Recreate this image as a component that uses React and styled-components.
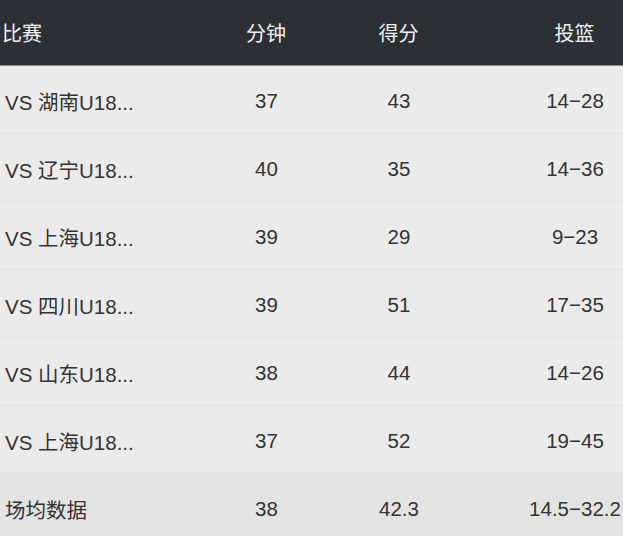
import React from "react";
import styled, { createGlobalStyle } from "styled-components";

const GlobalStyle = createGlobalStyle`
    html, body {
        margin: 0;
        padding: 0;
        background: #ebebeb;
    }
`;

const Viewport = styled.div`
    width: 100%;
    overflow: hidden;
`;

const Table = styled.div`
    width: 685px;
    font-family: "Liberation Sans", "Noto Sans CJK SC", sans-serif;
    color: #333;
`;

const Row = styled.div`
    display: grid;
    grid-template-columns: 200px 133px 132px 220px;
    height: ${(p) => p.$height}px;
    background-color: ${(p) => p.$bg};
    border-bottom: 1px solid ${(p) => p.$line};
    box-sizing: border-box;
`;

const HeadCell = styled.div`
    display: flex;
    align-items: center;
    justify-content: ${(p) => (p.$left ? "flex-start" : "center")};
    padding-left: ${(p) => (p.$left ? "2px" : "0")};
    font-size: 20px;
    color: #f2f2f2;
    border-right: 1px solid #292d32;
`;

const Cell = styled.div`
    display: flex;
    align-items: center;
    justify-content: ${(p) => (p.$left ? "flex-start" : "center")};
    padding-left: ${(p) => (p.$left ? "5px" : "0")};
    padding-top: 3px;
    font-size: 20.5px;
    white-space: nowrap;
`;

const games = [
    ["VS 湖南U18...", "37", "43", "14−28"],
    ["VS 辽宁U18...", "40", "35", "14−36"],
    ["VS 上海U18...", "39", "29", "9−23"],
    ["VS 四川U18...", "39", "51", "17−35"],
    ["VS 山东U18...", "38", "44", "14−26"],
    ["VS 上海U18...", "37", "52", "19−45"],
];

const App = () => (
    <>
        <GlobalStyle/>
        <Viewport>
            <Table>
                <Row $height={66} $bg="#2b3035" $line="#8a8c8e">
                    <HeadCell $left>比赛</HeadCell>
                    <HeadCell>分钟</HeadCell>
                    <HeadCell>得分</HeadCell>
                    <HeadCell>投篮</HeadCell>
                </Row>
                {games.map((g, i) => (
                    <Row key={i} $height={i === 5 ? 67 : 68} $bg="#ebebeb" $line={i === 5 ? "#e6e6e6" : "#e2e2e2"}>
                        <Cell $left>{g[0]}</Cell>
                        <Cell>{g[1]}</Cell>
                        <Cell>{g[2]}</Cell>
                        <Cell>{g[3]}</Cell>
                    </Row>
                ))}
                <Row $height={70} $bg="#e3e3e3" $line="#e3e3e3">
                    <Cell $left>场均数据</Cell>
                    <Cell>38</Cell>
                    <Cell>42.3</Cell>
                    <Cell>14.5−32.2</Cell>
                </Row>
            </Table>
        </Viewport>
    </>
);

export default App;
